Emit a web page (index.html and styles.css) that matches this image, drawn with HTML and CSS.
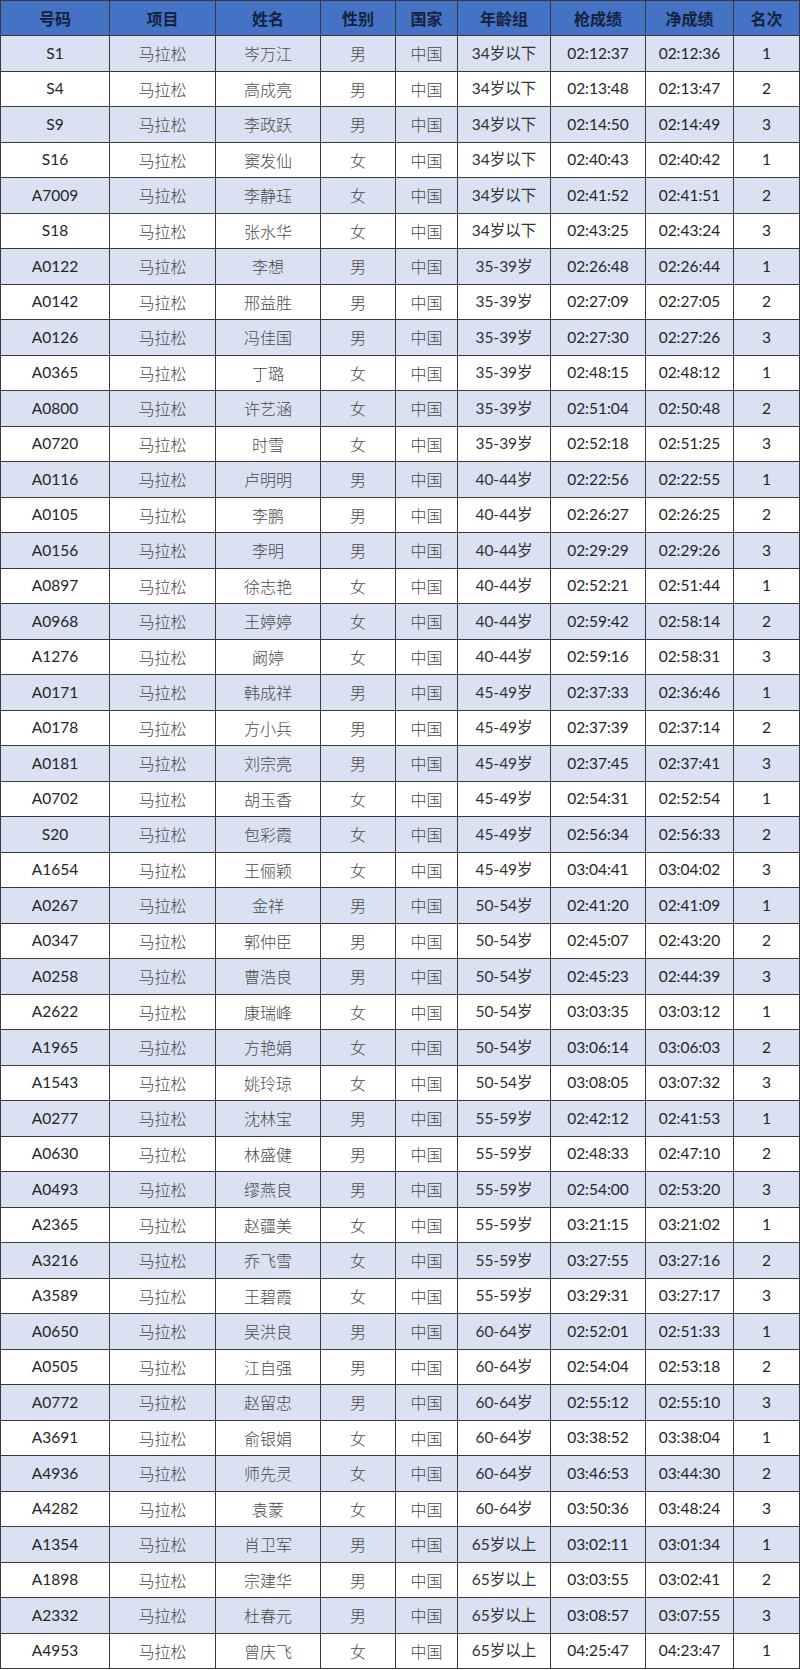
FILE: index.html
```html
<!DOCTYPE html>
<html lang="zh-CN">
<head>
<meta charset="utf-8">
<title>马拉松成绩</title>
<link rel="stylesheet" href="styles.css">
</head>
<body>
<table class="results">
<colgroup>
<col class="c-no"><col class="c-ev"><col class="c-name"><col class="c-sex"><col class="c-nat"><col class="c-age"><col class="c-gun"><col class="c-net"><col class="c-rank">
</colgroup>
<thead>
<tr><th>号码</th><th>项目</th><th>姓名</th><th>性别</th><th>国家</th><th>年龄组</th><th>枪成绩</th><th>净成绩</th><th>名次</th></tr>
</thead>
<tbody id="rows">
<tr><td class="lat">S1</td><td>马拉松</td><td>岑万江</td><td>男</td><td>中国</td><td class="mix">34岁以下</td><td class="lat">02:12:37</td><td class="lat">02:12:36</td><td class="lat">1</td></tr>
<tr><td class="lat">S4</td><td>马拉松</td><td>高成亮</td><td>男</td><td>中国</td><td class="mix">34岁以下</td><td class="lat">02:13:48</td><td class="lat">02:13:47</td><td class="lat">2</td></tr>
<tr><td class="lat">S9</td><td>马拉松</td><td>李政跃</td><td>男</td><td>中国</td><td class="mix">34岁以下</td><td class="lat">02:14:50</td><td class="lat">02:14:49</td><td class="lat">3</td></tr>
<tr><td class="lat">S16</td><td>马拉松</td><td>窦发仙</td><td>女</td><td>中国</td><td class="mix">34岁以下</td><td class="lat">02:40:43</td><td class="lat">02:40:42</td><td class="lat">1</td></tr>
<tr><td class="lat">A7009</td><td>马拉松</td><td>李静珏</td><td>女</td><td>中国</td><td class="mix">34岁以下</td><td class="lat">02:41:52</td><td class="lat">02:41:51</td><td class="lat">2</td></tr>
<tr><td class="lat">S18</td><td>马拉松</td><td>张水华</td><td>女</td><td>中国</td><td class="mix">34岁以下</td><td class="lat">02:43:25</td><td class="lat">02:43:24</td><td class="lat">3</td></tr>
<tr><td class="lat">A0122</td><td>马拉松</td><td>李想</td><td>男</td><td>中国</td><td class="mix">35-39岁</td><td class="lat">02:26:48</td><td class="lat">02:26:44</td><td class="lat">1</td></tr>
<tr><td class="lat">A0142</td><td>马拉松</td><td>邢益胜</td><td>男</td><td>中国</td><td class="mix">35-39岁</td><td class="lat">02:27:09</td><td class="lat">02:27:05</td><td class="lat">2</td></tr>
<tr><td class="lat">A0126</td><td>马拉松</td><td>冯佳国</td><td>男</td><td>中国</td><td class="mix">35-39岁</td><td class="lat">02:27:30</td><td class="lat">02:27:26</td><td class="lat">3</td></tr>
<tr><td class="lat">A0365</td><td>马拉松</td><td>丁璐</td><td>女</td><td>中国</td><td class="mix">35-39岁</td><td class="lat">02:48:15</td><td class="lat">02:48:12</td><td class="lat">1</td></tr>
<tr><td class="lat">A0800</td><td>马拉松</td><td>许艺涵</td><td>女</td><td>中国</td><td class="mix">35-39岁</td><td class="lat">02:51:04</td><td class="lat">02:50:48</td><td class="lat">2</td></tr>
<tr><td class="lat">A0720</td><td>马拉松</td><td>时雪</td><td>女</td><td>中国</td><td class="mix">35-39岁</td><td class="lat">02:52:18</td><td class="lat">02:51:25</td><td class="lat">3</td></tr>
<tr><td class="lat">A0116</td><td>马拉松</td><td>卢明明</td><td>男</td><td>中国</td><td class="mix">40-44岁</td><td class="lat">02:22:56</td><td class="lat">02:22:55</td><td class="lat">1</td></tr>
<tr><td class="lat">A0105</td><td>马拉松</td><td>李鹏</td><td>男</td><td>中国</td><td class="mix">40-44岁</td><td class="lat">02:26:27</td><td class="lat">02:26:25</td><td class="lat">2</td></tr>
<tr><td class="lat">A0156</td><td>马拉松</td><td>李明</td><td>男</td><td>中国</td><td class="mix">40-44岁</td><td class="lat">02:29:29</td><td class="lat">02:29:26</td><td class="lat">3</td></tr>
<tr><td class="lat">A0897</td><td>马拉松</td><td>徐志艳</td><td>女</td><td>中国</td><td class="mix">40-44岁</td><td class="lat">02:52:21</td><td class="lat">02:51:44</td><td class="lat">1</td></tr>
<tr><td class="lat">A0968</td><td>马拉松</td><td>王婷婷</td><td>女</td><td>中国</td><td class="mix">40-44岁</td><td class="lat">02:59:42</td><td class="lat">02:58:14</td><td class="lat">2</td></tr>
<tr><td class="lat">A1276</td><td>马拉松</td><td>阚婷</td><td>女</td><td>中国</td><td class="mix">40-44岁</td><td class="lat">02:59:16</td><td class="lat">02:58:31</td><td class="lat">3</td></tr>
<tr><td class="lat">A0171</td><td>马拉松</td><td>韩成祥</td><td>男</td><td>中国</td><td class="mix">45-49岁</td><td class="lat">02:37:33</td><td class="lat">02:36:46</td><td class="lat">1</td></tr>
<tr><td class="lat">A0178</td><td>马拉松</td><td>方小兵</td><td>男</td><td>中国</td><td class="mix">45-49岁</td><td class="lat">02:37:39</td><td class="lat">02:37:14</td><td class="lat">2</td></tr>
<tr><td class="lat">A0181</td><td>马拉松</td><td>刘宗亮</td><td>男</td><td>中国</td><td class="mix">45-49岁</td><td class="lat">02:37:45</td><td class="lat">02:37:41</td><td class="lat">3</td></tr>
<tr><td class="lat">A0702</td><td>马拉松</td><td>胡玉香</td><td>女</td><td>中国</td><td class="mix">45-49岁</td><td class="lat">02:54:31</td><td class="lat">02:52:54</td><td class="lat">1</td></tr>
<tr><td class="lat">S20</td><td>马拉松</td><td>包彩霞</td><td>女</td><td>中国</td><td class="mix">45-49岁</td><td class="lat">02:56:34</td><td class="lat">02:56:33</td><td class="lat">2</td></tr>
<tr><td class="lat">A1654</td><td>马拉松</td><td>王俪颖</td><td>女</td><td>中国</td><td class="mix">45-49岁</td><td class="lat">03:04:41</td><td class="lat">03:04:02</td><td class="lat">3</td></tr>
<tr><td class="lat">A0267</td><td>马拉松</td><td>金祥</td><td>男</td><td>中国</td><td class="mix">50-54岁</td><td class="lat">02:41:20</td><td class="lat">02:41:09</td><td class="lat">1</td></tr>
<tr><td class="lat">A0347</td><td>马拉松</td><td>郭仲臣</td><td>男</td><td>中国</td><td class="mix">50-54岁</td><td class="lat">02:45:07</td><td class="lat">02:43:20</td><td class="lat">2</td></tr>
<tr><td class="lat">A0258</td><td>马拉松</td><td>曹浩良</td><td>男</td><td>中国</td><td class="mix">50-54岁</td><td class="lat">02:45:23</td><td class="lat">02:44:39</td><td class="lat">3</td></tr>
<tr><td class="lat">A2622</td><td>马拉松</td><td>康瑞峰</td><td>女</td><td>中国</td><td class="mix">50-54岁</td><td class="lat">03:03:35</td><td class="lat">03:03:12</td><td class="lat">1</td></tr>
<tr><td class="lat">A1965</td><td>马拉松</td><td>方艳娟</td><td>女</td><td>中国</td><td class="mix">50-54岁</td><td class="lat">03:06:14</td><td class="lat">03:06:03</td><td class="lat">2</td></tr>
<tr><td class="lat">A1543</td><td>马拉松</td><td>姚玲琼</td><td>女</td><td>中国</td><td class="mix">50-54岁</td><td class="lat">03:08:05</td><td class="lat">03:07:32</td><td class="lat">3</td></tr>
<tr><td class="lat">A0277</td><td>马拉松</td><td>沈林宝</td><td>男</td><td>中国</td><td class="mix">55-59岁</td><td class="lat">02:42:12</td><td class="lat">02:41:53</td><td class="lat">1</td></tr>
<tr><td class="lat">A0630</td><td>马拉松</td><td>林盛健</td><td>男</td><td>中国</td><td class="mix">55-59岁</td><td class="lat">02:48:33</td><td class="lat">02:47:10</td><td class="lat">2</td></tr>
<tr><td class="lat">A0493</td><td>马拉松</td><td>缪燕良</td><td>男</td><td>中国</td><td class="mix">55-59岁</td><td class="lat">02:54:00</td><td class="lat">02:53:20</td><td class="lat">3</td></tr>
<tr><td class="lat">A2365</td><td>马拉松</td><td>赵疆美</td><td>女</td><td>中国</td><td class="mix">55-59岁</td><td class="lat">03:21:15</td><td class="lat">03:21:02</td><td class="lat">1</td></tr>
<tr><td class="lat">A3216</td><td>马拉松</td><td>乔飞雪</td><td>女</td><td>中国</td><td class="mix">55-59岁</td><td class="lat">03:27:55</td><td class="lat">03:27:16</td><td class="lat">2</td></tr>
<tr><td class="lat">A3589</td><td>马拉松</td><td>王碧霞</td><td>女</td><td>中国</td><td class="mix">55-59岁</td><td class="lat">03:29:31</td><td class="lat">03:27:17</td><td class="lat">3</td></tr>
<tr><td class="lat">A0650</td><td>马拉松</td><td>吴洪良</td><td>男</td><td>中国</td><td class="mix">60-64岁</td><td class="lat">02:52:01</td><td class="lat">02:51:33</td><td class="lat">1</td></tr>
<tr><td class="lat">A0505</td><td>马拉松</td><td>江自强</td><td>男</td><td>中国</td><td class="mix">60-64岁</td><td class="lat">02:54:04</td><td class="lat">02:53:18</td><td class="lat">2</td></tr>
<tr><td class="lat">A0772</td><td>马拉松</td><td>赵留忠</td><td>男</td><td>中国</td><td class="mix">60-64岁</td><td class="lat">02:55:12</td><td class="lat">02:55:10</td><td class="lat">3</td></tr>
<tr><td class="lat">A3691</td><td>马拉松</td><td>俞银娟</td><td>女</td><td>中国</td><td class="mix">60-64岁</td><td class="lat">03:38:52</td><td class="lat">03:38:04</td><td class="lat">1</td></tr>
<tr><td class="lat">A4936</td><td>马拉松</td><td>师先灵</td><td>女</td><td>中国</td><td class="mix">60-64岁</td><td class="lat">03:46:53</td><td class="lat">03:44:30</td><td class="lat">2</td></tr>
<tr><td class="lat">A4282</td><td>马拉松</td><td>袁蒙</td><td>女</td><td>中国</td><td class="mix">60-64岁</td><td class="lat">03:50:36</td><td class="lat">03:48:24</td><td class="lat">3</td></tr>
<tr><td class="lat">A1354</td><td>马拉松</td><td>肖卫军</td><td>男</td><td>中国</td><td class="mix">65岁以上</td><td class="lat">03:02:11</td><td class="lat">03:01:34</td><td class="lat">1</td></tr>
<tr><td class="lat">A1898</td><td>马拉松</td><td>宗建华</td><td>男</td><td>中国</td><td class="mix">65岁以上</td><td class="lat">03:03:55</td><td class="lat">03:02:41</td><td class="lat">2</td></tr>
<tr><td class="lat">A2332</td><td>马拉松</td><td>杜春元</td><td>男</td><td>中国</td><td class="mix">65岁以上</td><td class="lat">03:08:57</td><td class="lat">03:07:55</td><td class="lat">3</td></tr>
<tr><td class="lat">A4953</td><td>马拉松</td><td>曾庆飞</td><td>女</td><td>中国</td><td class="mix">65岁以上</td><td class="lat">04:25:47</td><td class="lat">04:23:47</td><td class="lat">1</td></tr>
</tbody>
</table>
</body>
</html>
```

FILE: styles.css
```css
html, body {
  margin: 0;
  padding: 0;
  background: #ffffff;
}

.results {
  border-collapse: collapse;
  table-layout: fixed;
  width: 799px;
  font-family: "Noto Sans CJK SC", sans-serif;
}

.c-no { width: 109px; }
.c-ev { width: 106px; }
.c-name { width: 105px; }
.c-sex { width: 75px; }
.c-nat { width: 62px; }
.c-age { width: 93px; }
.c-gun { width: 95px; }
.c-net { width: 88px; }
.c-rank { width: 66px; }

.results th,
.results td {
  border: 1px solid #3a3a3a;
  padding: 0;
  text-align: center;
  vertical-align: middle;
  white-space: nowrap;
  overflow: hidden;
}

.results th {
  height: 34px;
  background: #4472c4;
  color: #16233f;
  font-size: 16px;
  font-weight: 700;
  letter-spacing: 0;
}

.results td {
  height: 34.5px;
  color: #4a4a4a;
  font-size: 16px;
  font-weight: 300;
  line-height: 1;
}

.results tbody tr:nth-child(odd) td {
  background: #d9e1f2;
}

.results td.lat {
  font-family: Lato, "Noto Sans", sans-serif;
  font-weight: 400;
  font-size: 15.5px;
  color: #262626;
}

.results td.mix {
  font-family: Lato, "Noto Sans CJK SC", sans-serif;
  font-weight: 400;
  font-size: 15.5px;
  color: #333333;
}
```
